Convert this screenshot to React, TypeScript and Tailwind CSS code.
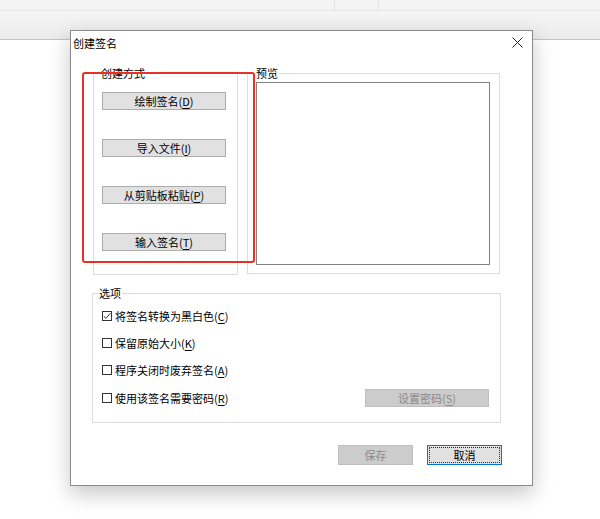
import React from "react";

const U = ({ c }: { c: string }) => (
  <span className="underline underline-offset-[2px] decoration-[1px]">{c}</span>
);

const Btn = ({ label, k }: { label: string; k: string }) => (
  <div className="h-[18px] w-[124px] bg-[#e1e1e1] border border-[#adadad] flex items-center justify-center text-[11px] leading-[16px] text-black">
    {label}(<U c={k} />)
  </div>
);

const Check = ({ checked, label, k }: { checked?: boolean; label: string; k: string }) => (
  <div className="flex items-center h-[16px]">
    <div className="w-[10px] h-[10px] border border-[#333] bg-white flex items-center justify-center">
      {checked && (
        <svg width="8" height="8" viewBox="0 0 8 8">
          <path d="M0.8 4.2 L3 6.3 L7.3 1.3" fill="none" stroke="#333" strokeWidth="1" />
        </svg>
      )}
    </div>
    <span className="ml-[3px] text-[11px] leading-[16px] text-black">
      {label}(<U c={k} />)
    </span>
  </div>
);

export default function App() {
  return (
    <div className="relative w-[600px] h-[519px] bg-white overflow-hidden font-['Noto_Sans_CJK_SC',sans-serif]">
      {/* background app chrome */}
      <div className="flex flex-col">
        <div className="flex h-[11px] bg-[#f4f4f4] border-b border-[#e6e6e6]">
          <div className="w-[335px] border-r border-[#e2e2e2]" />
          <div className="w-[44px] border-r border-[#e2e2e2]" />
          <div className="flex-1" />
        </div>
        <div className="h-[29px] bg-gradient-to-b from-[#f5f5f5] to-[#ebebeb] border-b border-[#c4c4c4]" />
      </div>

      {/* dialog */}
      <div className="absolute left-[70px] top-[30px] w-[463px] h-[456px] bg-white border border-[#8a8a8a] shadow-[0_8px_20px_rgba(0,0,0,0.22)] flex flex-col">
        <div className="h-[23px] flex items-center justify-between pl-[2px] pr-[9px]">
          <span className="text-[11px] leading-[16px] text-black">创建签名</span>
          <svg width="11" height="11" viewBox="0 0 11 11">
            <path d="M0.5 0.5 L10.5 10.5 M10.5 0.5 L0.5 10.5" stroke="#222" strokeWidth="1" />
          </svg>
        </div>

        <div className="flex flex-col pl-[21px] mt-[11px]">
          <div className="flex">
            <fieldset className="ml-[1px] w-[145px] h-[210px] border border-[#dcdcdc] flex flex-col items-start">
              <legend className="ml-[6px] px-[1px] text-[11px] leading-[16px] text-black">创建方式</legend>
              <div className="flex flex-col gap-[29px] pl-[8px] pt-[11px]">
                <Btn label="绘制签名" k="D" />
                <Btn label="导入文件" k="I" />
                <Btn label="从剪贴板粘贴" k="P" />
                <Btn label="输入签名" k="T" />
              </div>
            </fieldset>
            <fieldset className="ml-[9px] w-[253px] h-[209px] border border-[#dcdcdc]">
              <legend className="ml-[7px] px-[1px] text-[11px] leading-[16px] text-black">预览</legend>
              <div className="ml-[8px] mt-[1px] w-[234px] h-[183px] border border-[#828282] bg-white" />
            </fieldset>
          </div>

          <fieldset className="mt-[10px] w-[409px] h-[138px] border border-[#dcdcdc]">
            <legend className="ml-[5px] px-[1px] text-[11px] leading-[16px] text-black">选项</legend>
            <div className="flex flex-col gap-[11px] pl-[9px] pr-[11px] pt-[7px]">
              <Check checked label="将签名转换为黑白色" k="C" />
              <Check label="保留原始大小" k="K" />
              <Check label="程序关闭时废弃签名" k="A" />
              <div className="flex items-center justify-between">
                <Check label="使用该签名需要密码" k="R" />
                <div className="h-[18px] w-[124px] bg-[#cccccc] border border-[#bfbfbf] flex items-center justify-center text-[11px] leading-[16px] text-[#8a8a8a]">
                  设置密码(<U c="S" />)
                </div>
              </div>
            </div>
          </fieldset>
        </div>

        <div className="flex justify-end gap-[14px] pr-[30px] mt-[22px]">
          <div className="h-[20px] w-[75px] bg-[#cccccc] border border-[#bfbfbf] flex items-center justify-center text-[11px] leading-[16px] text-[#8a8a8a]">
            保存
          </div>
          <div className="h-[20px] w-[75px] bg-[#e1e1e1] border border-[#0078d7] p-[1px] flex">
            <div className="flex-1 border border-dotted border-[#333] flex items-center justify-center text-[11px] leading-[16px] text-black">
              取消
            </div>
          </div>
        </div>

        {/* red annotation rectangle */}
        <div className="absolute left-[11px] top-[41px] w-[173px] h-[191px] border-2 border-[#e8302a] rounded-[3px] pointer-events-none" />
      </div>
    </div>
  );
}
